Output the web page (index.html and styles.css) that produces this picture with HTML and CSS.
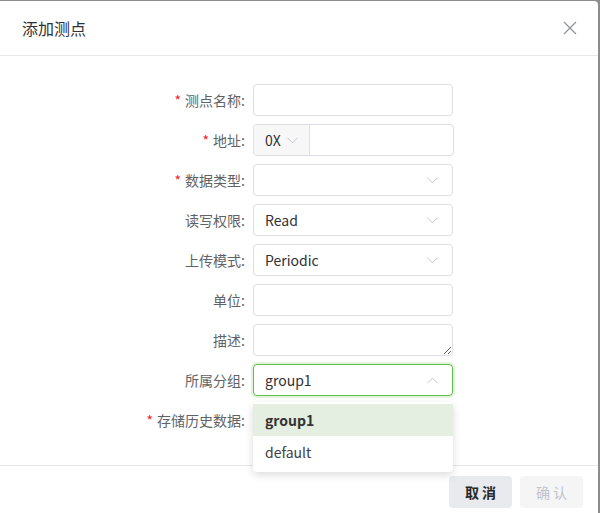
FILE: index.html
```html
<!DOCTYPE html>
<html lang="zh">
<head>
<meta charset="utf-8">
<link rel="stylesheet" href="styles.css">
</head>
<body>
<div class="modal">
  <div class="header">
    <span class="title">添加测点</span>
    <svg class="close" width="14" height="14" viewBox="0 0 14 14"><path d="M1 1 L13 13 M13 1 L1 13" stroke="#909399" stroke-width="1.3" fill="none"/></svg>
  </div>
  <div class="body">
    <div class="row"><label class="req">测点名称:</label><div class="input"></div></div>
    <div class="row"><label class="req">地址:</label>
      <div class="group">
        <div class="prepend">0X <svg width="11" height="7" viewBox="0 0 11 7"><path d="M0.5 0.8 L5.5 5.8 L10.5 0.8" stroke="#c0c4cc" fill="none"/></svg></div>
        <div class="ginput"></div>
      </div>
    </div>
    <div class="row"><label class="req">数据类型:</label><div class="input select"><span></span><svg width="11" height="7" viewBox="0 0 11 7"><path d="M0.5 0.8 L5.5 5.8 L10.5 0.8" stroke="#c0c4cc" fill="none"/></svg></div></div>
    <div class="row"><label>读写权限:</label><div class="input select"><span>Read</span><svg width="11" height="7" viewBox="0 0 11 7"><path d="M0.5 0.8 L5.5 5.8 L10.5 0.8" stroke="#c0c4cc" fill="none"/></svg></div></div>
    <div class="row"><label>上传模式:</label><div class="input select"><span>Periodic</span><svg width="11" height="7" viewBox="0 0 11 7"><path d="M0.5 0.8 L5.5 5.8 L10.5 0.8" stroke="#c0c4cc" fill="none"/></svg></div></div>
    <div class="row"><label>单位:</label><div class="input"></div></div>
    <div class="row"><label>描述:</label><textarea class="textarea"></textarea></div>
    <div class="row"><label>所属分组:</label>
      <div class="selwrap">
        <div class="input select focus"><span>group1</span><svg width="11" height="7" viewBox="0 0 11 7"><path d="M0.5 6.2 L5.5 1.2 L10.5 6.2" stroke="#c0c4cc" fill="none"/></svg></div>
        <ul class="dropdown">
          <li class="active">group1</li>
          <li>default</li>
        </ul>
      </div>
    </div>
    <div class="row"><label class="req">存储历史数据:</label><div class="empty"></div></div>
  </div>
  <div class="footer">
    <button class="btn cancel">取 消</button>
    <button class="btn ok">确 认</button>
  </div>
</div>
</body>
</html>
```
FILE: styles.css
```css
* { box-sizing: border-box; }
html, body { margin: 0; padding: 0; }
body {
  background: #8c8c8c;
  font-family: "Noto Sans CJK SC", "Open Sans", sans-serif;
  font-size: 14px;
  width: 600px;
  height: 513px;
  overflow: hidden;
}
.modal {
  margin-top: 1px;
  width: 598px;
  height: 520px;
  background: #fff;
  border-radius: 0 4px 0 0;
}
.header {
  height: 55px;
  border-bottom: 1px solid #e8e8e8;
  display: flex;
  align-items: center;
  justify-content: space-between;
  padding: 0 21px 0 22px;
}
.title { font-size: 16px; color: #303133; }
.close { margin-top: 0; }
.body {
  padding: 28px 0 28px 0;
  height: 409px;
}
.row {
  display: flex;
  align-items: center;
  height: 32px;
  margin-bottom: 8px;
}
.row:last-child { margin-bottom: 0; }
label {
  width: 253px;
  padding-right: 8px;
  text-align: right;
  color: #606266;
  font-size: 14px;
}
label.req::before {
  content: "*";
  color: #f5222d;
  margin-right: 4px;
}
.input {
  width: 200px;
  height: 32px;
  border: 1px solid #dcdfe6;
  border-radius: 4px;
  background: #fff;
}
.select {
  display: flex;
  align-items: center;
  justify-content: space-between;
  padding: 0 14px 0 11px;
  color: #303133;
}
.select.focus {
  border-color: #5cbf4f;
  box-shadow: 0 0 0 2px rgba(103, 194, 58, 0.18);
}
.group {
  display: flex;
  width: 201px;
  height: 32px;
  border: 1px solid #dcdfe6;
  border-radius: 4px;
  overflow: hidden;
}
.prepend {
  width: 56px;
  background: #f7f7f8;
  border-right: 1px solid #dcdfe6;
  display: flex;
  align-items: center;
  gap: 6px;
  padding-left: 11px;
  color: #303133;
}
.ginput { flex: 1; }
.textarea {
  width: 200px;
  height: 32px;
  border: 1px solid #dcdfe6;
  border-radius: 4px;
  resize: vertical;
  margin: 0;
  font-family: inherit;
  outline: none;
}
.selwrap { position: relative; }
.dropdown {
  position: absolute;
  top: 38px;
  left: 0;
  width: 200px;
  margin: 0;
  padding: 2px 0 4px;
  list-style: none;
  background: #fff;
  border-radius: 4px;
  box-shadow: 0 3px 8px rgba(0, 0, 0, 0.14);
  z-index: 5;
}
.dropdown li {
  height: 32px;
  line-height: 32px;
  padding: 0 12px;
  color: #404040;
}
.dropdown li.active {
  background: #e4efe1;
  font-weight: bold;
  color: #333;
}
.footer {
  border-top: 1px solid #e8e8e8;
  display: flex;
  justify-content: flex-end;
  gap: 8px;
  padding: 10px 15px 0 0;
}
.btn {
  width: 63px;
  height: 32px;
  border: none;
  border-radius: 4px;
  font-family: inherit;
  font-size: 14px;
  padding: 0;
}
.cancel { background: #e8eaee; color: #262626; font-weight: bold; }
.ok { background: #f5f5f5; color: #c0c4cc; }
```
